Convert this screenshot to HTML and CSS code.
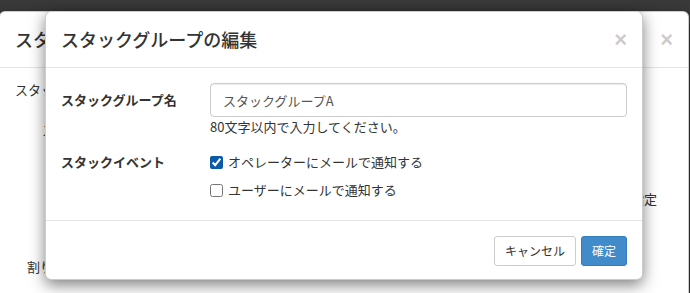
FILE: index.html
```html
<!DOCTYPE html>
<html lang="ja">
<head>
    <meta charset="UTF-8">
    <meta name="viewport" content="width=device-width, initial-scale=1.0">
    <title>スタックグループの編集</title>
    <link rel="stylesheet" href="styles.css">
</head>
<body>
    <!-- modal underneath (partly hidden) -->
    <div class="modal modal-back">
        <div class="modal-header">
            <h4 class="modal-title">スタックグループの作成</h4>
            <span class="close">&times;</span>
        </div>
        <div class="back-body">
            <div class="back-row">スタック設定を入力してください</div>
            <div class="back-row indent">スタック名</div>
            <div class="back-row right">開始時刻を指定</div>
            <div class="back-row indent-sm">割り当て</div>
            <div class="back-btn"></div>
        </div>
    </div>

    <!-- edit dialog -->
    <div class="modal modal-front">
        <div class="modal-header">
            <h4 class="modal-title">スタックグループの編集</h4>
            <span class="close">&times;</span>
        </div>
        <div class="modal-body">
            <div class="form-row">
                <label class="form-label">スタックグループ名</label>
                <div class="form-field">
                    <input type="text" class="form-input" value="スタックグループA">
                    <p class="help-block">80文字以内で入力してください。</p>
                </div>
            </div>
            <div class="form-row events">
                <label class="form-label">スタックイベント</label>
                <div class="form-field checks">
                    <label class="check"><input type="checkbox" checked>オペレーターにメールで通知する</label>
                    <label class="check"><input type="checkbox">ユーザーにメールで通知する</label>
                </div>
            </div>
        </div>
        <div class="modal-footer">
            <button class="btn btn-default">キャンセル</button>
            <button class="btn btn-primary">確定</button>
        </div>
    </div>
</body>
</html>
```

FILE: styles.css
```css
* {
    margin: 0;
    padding: 0;
    box-sizing: border-box;
    font-family: "Noto Sans CJK JP", "Noto Sans", sans-serif;
}

body {
    background: #3a3a3a;
    color: #333;
    font-size: 13px;
    width: 690px;
    height: 293px;
    overflow: hidden;
    position: relative;
}

.modal {
    position: absolute;
    top: 11px;
    background: #fff;
    border: 1px solid rgba(0, 0, 0, 0.2);
    border-radius: 6px;
    box-shadow: 0 5px 15px rgba(0, 0, 0, 0.5);
}

.modal-back {
    left: -1px;
    width: 690px;
    height: 282px;
    border-bottom: none;
    border-radius: 6px 6px 0 0;
    overflow: hidden;
}

.modal-front {
    left: 45px;
    width: 598px;
}

.modal-header {
    display: flex;
    justify-content: space-between;
    align-items: center;
    padding: 15px;
    border-bottom: 1px solid #e5e5e5;
}

.modal-title {
    font-size: 18px;
    font-weight: 500;
    line-height: 25px;
    color: #333;
}

.close {
    font-family: "Liberation Sans", sans-serif;
    font-size: 22px;
    font-weight: bold;
    line-height: 1;
    color: #000;
    opacity: 0.2;
}

.back-body {
    padding: 12px 15px 0;
}

.back-row {
    line-height: 20px;
    margin-bottom: 20px;
}

.back-row.indent {
    padding-left: 27px;
}

.back-row.right {
    text-align: right;
    padding-right: 16px;
    margin-top: 49px;
    margin-bottom: 48px;
}

.back-row.indent-sm {
    padding-left: 12px;
    margin-bottom: 16px;
}

.back-btn {
    margin-left: 270px;
    width: 128px;
    height: 3px;
    border: 1px solid #ccc;
    border-bottom: none;
    border-radius: 4px 4px 0 0;
}

.modal-body {
    padding: 15px 15px 20px;
}

.form-row {
    display: grid;
    grid-template-columns: 149px 1fr;
}

.form-row.events {
    margin-top: 15px;
}

.form-label {
    font-weight: bold;
    line-height: 20px;
    padding-top: 7px;
}

.events .form-label {
    padding-top: 0;
}

.form-input {
    display: block;
    width: 100%;
    height: 34px;
    padding: 6px 12px;
    font-size: 13px;
    color: #555;
    border: 1px solid #ccc;
    border-radius: 4px;
    box-shadow: inset 0 1px 1px rgba(0, 0, 0, 0.075);
    outline: none;
}

.help-block {
    line-height: 20px;
    color: #333;
}

.checks {
    display: flex;
    flex-direction: column;
    gap: 8px;
}

.check {
    display: flex;
    align-items: center;
    line-height: 20px;
}

.check input {
    width: 13px;
    height: 13px;
    margin: 0 5px 0 0;
    accent-color: #0b5aa9;
}

.modal-footer {
    display: flex;
    justify-content: flex-end;
    gap: 5px;
    padding: 15px 15px 13px;
    border-top: 1px solid #e5e5e5;
}

.btn {
    font-size: 12px;
    line-height: 18px;
    padding: 5px 10px;
    border: 1px solid transparent;
    border-radius: 3px;
    cursor: pointer;
}

.btn-default {
    background: #fff;
    color: #333;
    border-color: #ccc;
}

.btn-primary {
    background: #428bca;
    color: #fff;
    border-color: #357ebd;
}
```
